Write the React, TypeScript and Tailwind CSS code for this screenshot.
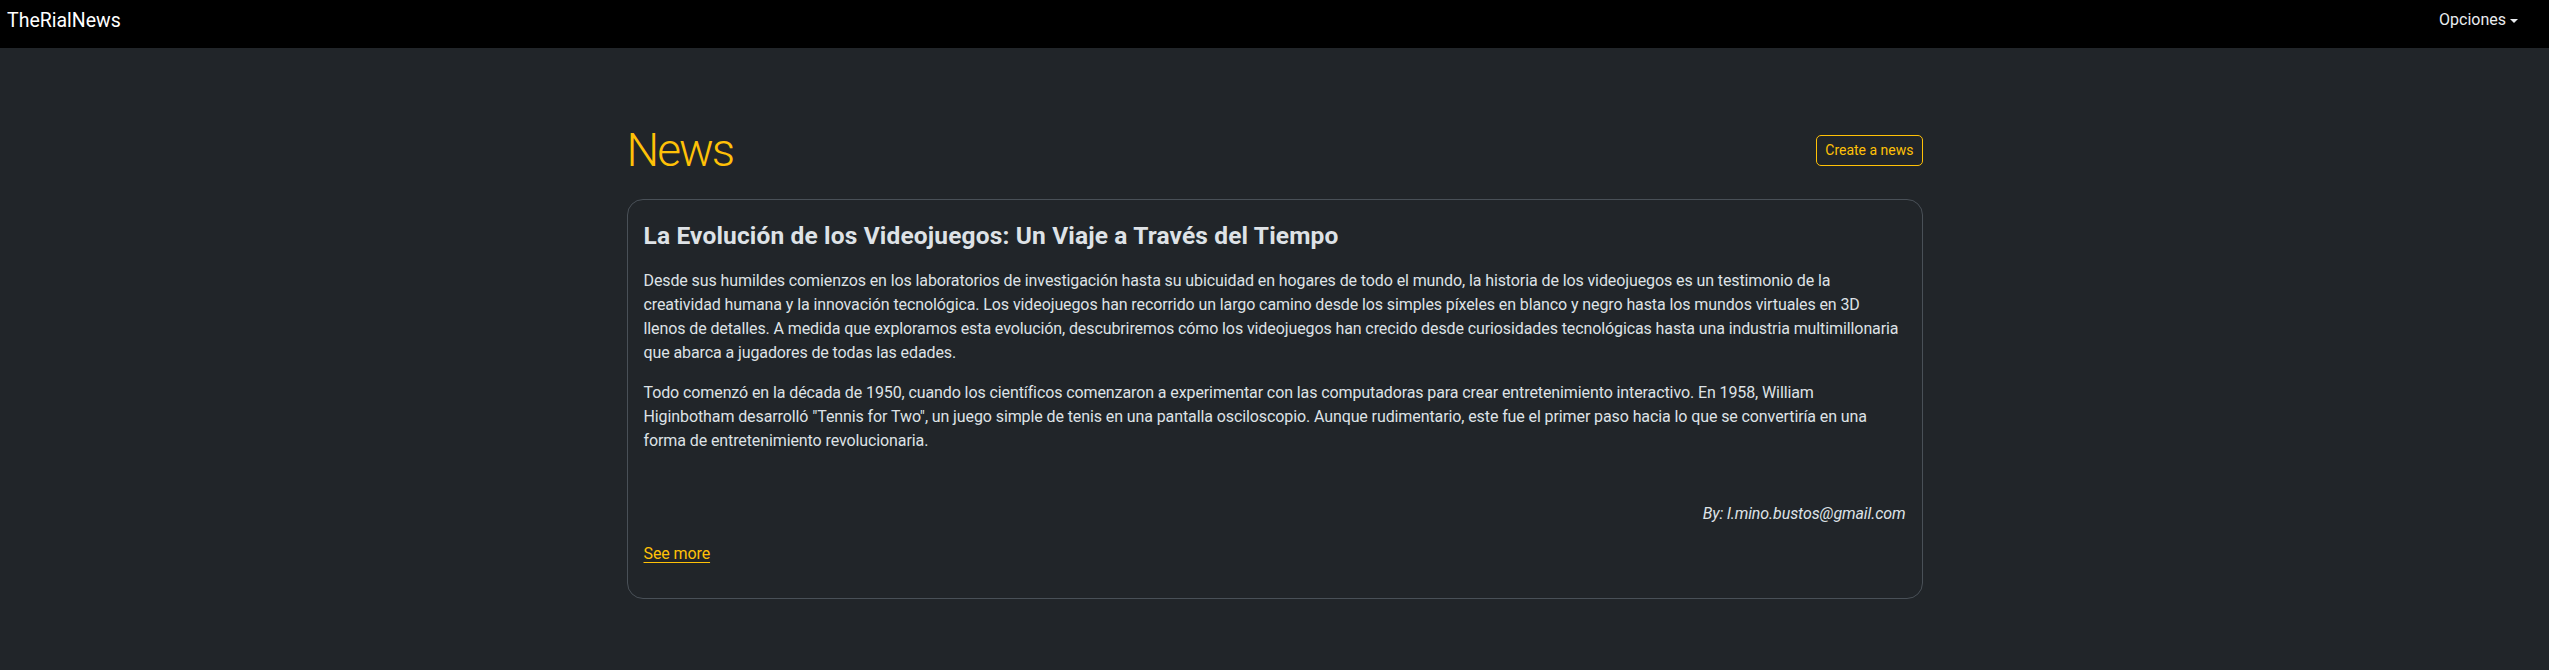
const font = { fontFamily: "'Segoe UI', Roboto, 'Liberation Sans', sans-serif" };

function Navbar() {
  return (
    <nav className="flex h-[48px] items-start justify-between bg-black">
      <a className="pl-[7px] pt-[6px] text-[19.5px] leading-[30px] text-white">TheRialNews</a>
      <button className="flex items-start pr-[31px] pt-[8px] text-[16px] leading-[24px] text-[#e9ecef]">
        Opciones
        <span className="ml-[4px] mt-[11px] h-0 w-0 border-x-[4.8px] border-t-[4.8px] border-x-transparent border-t-[#e9ecef]" />
      </button>
    </nav>
  );
}

function NewsCard() {
  return (
    <article className="rounded-[16px] border border-[#495057] px-4 pb-4 pt-[21px] text-[#dee2e6]">
      <h4 className="mb-[18px] text-[24.5px] font-bold leading-[1.2] tracking-[0.15px]">
        La Evolución de los Videojuegos: Un Viaje a Través del Tiempo
      </h4>
      <div className="text-[16px] leading-[24px] tracking-[-0.1px]">
        <p className="mb-4">
          Desde sus humildes comienzos en los laboratorios de investigación hasta su ubicuidad en hogares de todo el mundo, la historia de los videojuegos es un testimonio de la
          <br />
          creatividad humana y la innovación tecnológica. Los videojuegos han recorrido un largo camino desde los simples píxeles en blanco y negro hasta los mundos virtuales en 3D
          <br />
          llenos de detalles. A medida que exploramos esta evolución, descubriremos cómo los videojuegos han crecido desde curiosidades tecnológicas hasta una industria multimillonaria
          <br />
          que abarca a jugadores de todas las edades.
        </p>
        <p className="mb-4">
          Todo comenzó en la década de 1950, cuando los científicos comenzaron a experimentar con las computadoras para crear entretenimiento interactivo. En 1958, William
          <br />
          Higinbotham desarrolló "Tennis for Two", un juego simple de tenis en una pantalla osciloscopio. Aunque rudimentario, este fue el primer paso hacia lo que se convertiría en una
          <br />
          forma de entretenimiento revolucionaria.
        </p>
        <p className="mb-4 mt-[49px] text-right italic">By: l.mino.bustos@gmail.com</p>
        <p className="mb-4">
          <a className="text-[#ffc107] underline underline-offset-[3px]">See more</a>
        </p>
      </div>
    </article>
  );
}

export default function App() {
  return (
    <div className="min-h-screen bg-[#212529]" style={font}>
      <Navbar />
      <main className="mx-auto w-[1296px] pt-[75px]">
        <div className="mb-[21px] flex items-center justify-between">
          <h1 className="text-[46px] font-light leading-[1.2] tracking-[-2px] text-[#ffc107]">News</h1>
          <button className="rounded-[5px] border border-[#ffc107] px-2 py-1 text-[14px] leading-[21px] text-[#ffc107]">
            Create a news
          </button>
        </div>
        <NewsCard />
      </main>
    </div>
  );
}
